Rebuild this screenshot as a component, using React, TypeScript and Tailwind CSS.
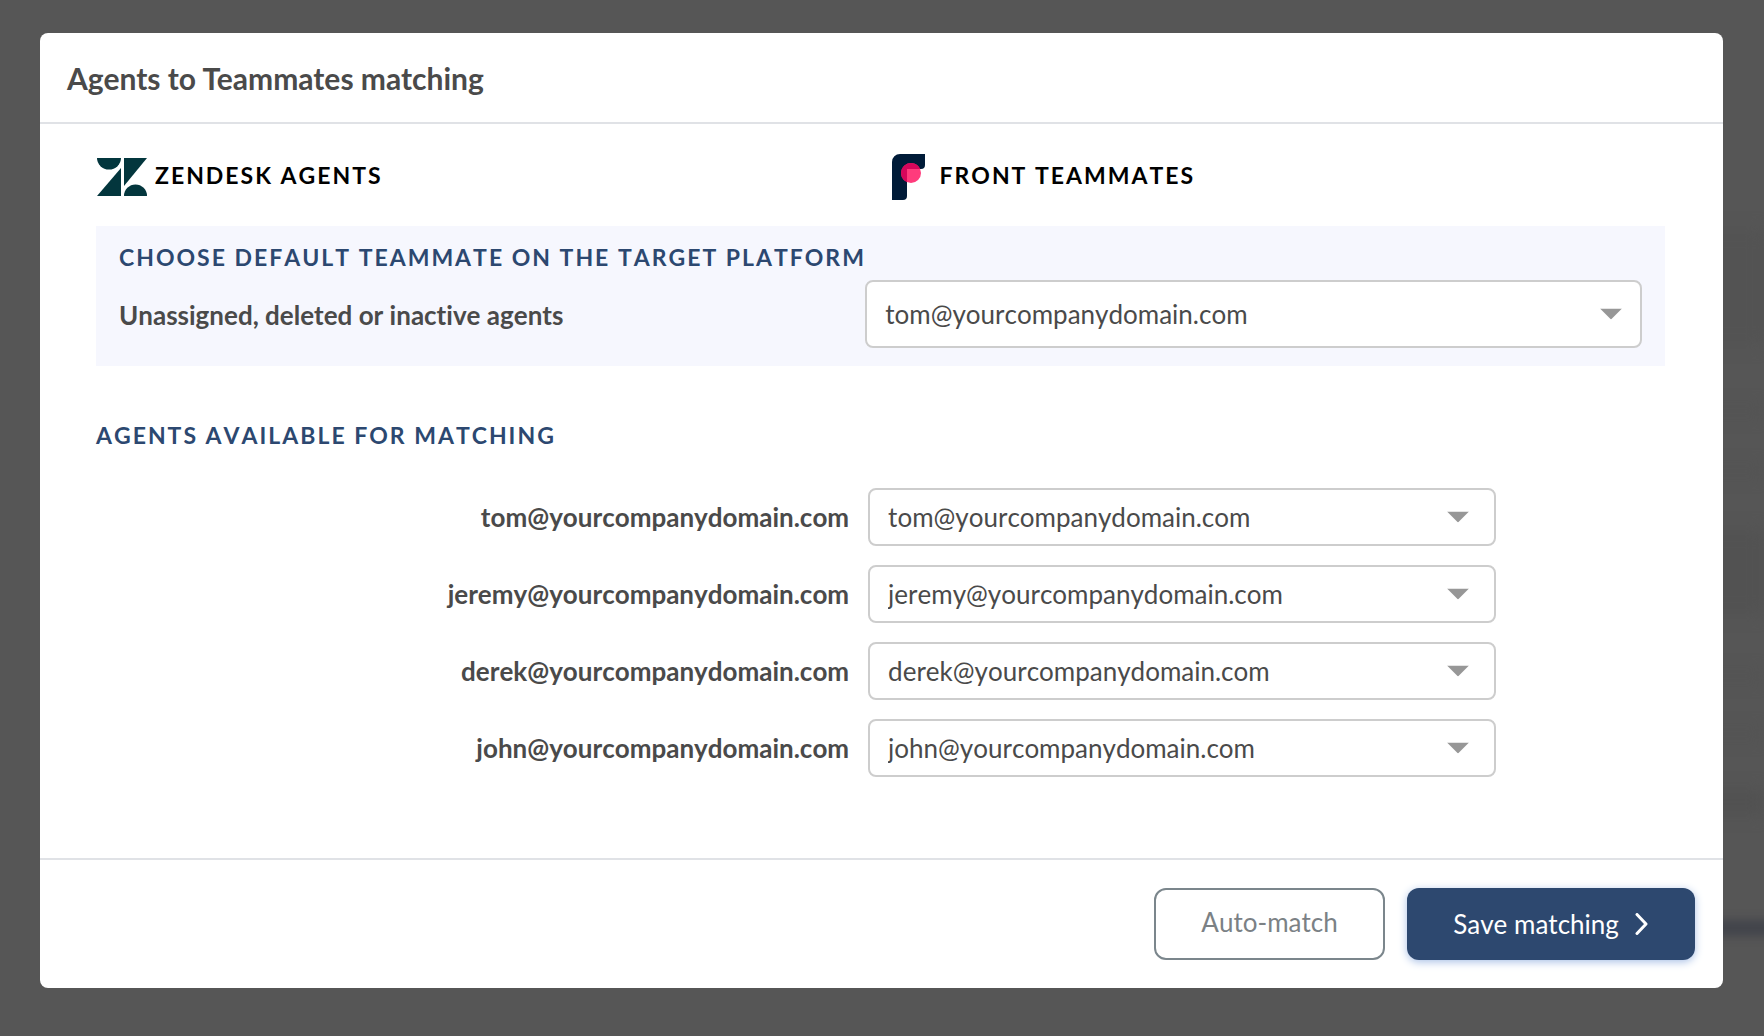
import { useId, useState } from "react";

const teammates = [
  "tom@yourcompanydomain.com",
  "jeremy@yourcompanydomain.com",
  "derek@yourcompanydomain.com",
  "john@yourcompanydomain.com",
];

function ZendeskLogo() {
  return (
    <svg width="50" height="38" viewBox="0 0 50 38" fill="#03363d" aria-hidden="true">
      <path d="M0 0h24a12 11.5 0 0 1-24 0z" />
      <path d="M24 10v28H0z" />
      <path d="M27 0h23L27 28z" />
      <path d="M27 38a11.5 11.5 0 0 1 23 0z" />
    </svg>
  );
}

function FrontLogo() {
  return (
    <svg width="34" height="46" viewBox="0 0 34 46" aria-hidden="true">
      <path d="M8 0h25v11a4 4 0 0 1-4 4H15v27a4 4 0 0 1-4 4H0V8a8 8 0 0 1 8-8z" fill="#001b38" />
      <circle cx="19" cy="19" r="10" fill="#ff3b7c" />
      <path d="M19 9a10 10 0 0 1 9.2 6H15v13.2A10 10 0 0 1 19 9z" fill="#d6065b" />
    </svg>
  );
}

// dimmed, blurred page behind the dialog
function Backdrop() {
  return (
    <div aria-hidden="true" className="pointer-events-none absolute inset-y-0 right-0 w-20 overflow-hidden">
      <div className="absolute inset-x-0 top-[230px] h-[115px] bg-[#535353] blur-sm" />
      <div className="absolute inset-x-0 top-[407px] h-2 bg-[#525252] blur-sm" />
      <div className="absolute inset-x-0 top-[467px] h-2 bg-[#525252] blur-sm" />
      <div className="absolute inset-x-0 top-[530px] h-[84px] bg-[#525252] blur-sm" />
      <div className="absolute inset-x-0 top-[672px] h-2 bg-[#525252] blur-sm" />
      <div className="absolute inset-x-0 top-[730px] h-2 bg-[#525252] blur-sm" />
      <div className="absolute inset-x-0 top-[790px] h-6 bg-[#515151] blur-sm" />
      <div className="absolute -inset-x-3 top-[920px] h-4 bg-[#42444b] blur-[5px]" />
    </div>
  );
}

interface TeammateSelectProps {
  id: string;
  value: string;
  onChange: (value: string) => void;
  large?: boolean;
}

function TeammateSelect({ id, value, onChange, large = false }: TeammateSelectProps) {
  return (
    <div className="relative">
      <select
        id={id}
        value={value}
        onChange={(e) => onChange(e.target.value)}
        className={`block w-full appearance-none rounded-lg border-2 border-[#cdcdcd] bg-white pl-[18px] pr-16 text-[26px] text-[#4a4a4a] ${
          large ? "h-[68px]" : "h-[58px]"
        }`}
      >
        {teammates.map((email) => (
          <option key={email} value={email}>
            {email}
          </option>
        ))}
      </select>
      <svg
        width="22"
        height="11"
        viewBox="0 0 22 11"
        fill="#979797"
        aria-hidden="true"
        className={`pointer-events-none absolute top-1/2 -translate-y-1/2 ${large ? "right-5" : "right-[27px]"}`}
      >
        <path d="M0 0h22L11 11z" />
      </svg>
    </div>
  );
}

function MatchRow({ email }: { email: string }) {
  const id = useId();
  const [value, setValue] = useState(email);

  return (
    <div className="flex items-center">
      <label htmlFor={id} className="w-[48%] text-right text-[26px] leading-8 font-bold">
        {email}
      </label>
      <div className="ml-[19px] w-2/5">
        <TeammateSelect id={id} value={value} onChange={setValue} />
      </div>
    </div>
  );
}

export default function App() {
  const [fallback, setFallback] = useState(teammates[0]);

  return (
    <div className="relative min-h-screen bg-[#565656] pt-[33px] pr-[41px] pb-12 pl-10 font-['Lato',sans-serif] text-[#4a4a4a] [font-kerning:none] [font-variant-ligatures:none]">
      <Backdrop />
      <div role="dialog" aria-labelledby="dialog-title" className="relative rounded-lg bg-white">
        <header className="flex h-[91px] items-center border-b-2 border-[#e0e2e6] px-[27px]">
          <h1 id="dialog-title" className="text-[30px] leading-9 font-bold [font-kerning:normal]">
            Agents to Teammates matching
          </h1>
        </header>

        <main className="pt-[30px] pr-[58px] pb-[81px] pl-14">
          <div className="grid h-[46px] grid-cols-2 items-center text-[23px] leading-10 font-bold tracking-[2px] text-black uppercase">
            <h2 className="flex items-center gap-2 pl-px">
              <ZendeskLogo />
              <span className="pb-1">Zendesk agents</span>
            </h2>
            <h2 className="flex items-center gap-[14px] pl-[11px]">
              <FrontLogo />
              <span className="pb-1">Front teammates</span>
            </h2>
          </div>

          <section className="mt-[26px] bg-[#f6f7fe] px-[23px] pt-4 pb-[18px]">
            <h3 className="text-[23px] leading-[30px] font-bold tracking-[2px] text-[#2c4870] uppercase">
              Choose default teammate on the target platform
            </h3>
            <div className="mt-2 flex items-center">
              <label htmlFor="default-teammate" className="w-[49%] pt-0.5 text-[26px] leading-8 font-bold">
                Unassigned, deleted or inactive agents
              </label>
              <div className="w-[51%]">
                <TeammateSelect id="default-teammate" value={fallback} onChange={setFallback} large />
              </div>
            </div>
          </section>

          <section className="mt-[54px]">
            <h3 className="text-[23px] leading-[30px] font-bold tracking-[2px] text-[#2c4870] uppercase">
              Agents available for matching
            </h3>
            <div className="mt-[38px] flex flex-col gap-[19px]">
              {teammates.map((email) => (
                <MatchRow key={email} email={email} />
              ))}
            </div>
          </section>
        </main>

        <footer className="flex justify-end gap-[22px] border-t-2 border-[#e0e2e6] px-7 py-7">
          <button
            type="button"
            className="h-[72px] w-[231px] rounded-xl border-2 border-[#7b868c] pb-1 text-[26px] text-[#7b8185]"
          >
            Auto-match
          </button>
          <button
            type="button"
            className="flex h-[72px] w-[288px] items-center justify-center gap-4 rounded-xl bg-[#2d486f] text-[26px] text-white shadow-[0_2px_8px_#a9c0e6]"
          >
            Save matching
            <svg width="14" height="22" viewBox="0 0 14 22" fill="none" stroke="currentColor" strokeWidth="3" aria-hidden="true">
              <path d="M2 1.5 11 11 2 20.5" strokeLinecap="round" strokeLinejoin="round" />
            </svg>
          </button>
        </footer>
      </div>
    </div>
  );
}
